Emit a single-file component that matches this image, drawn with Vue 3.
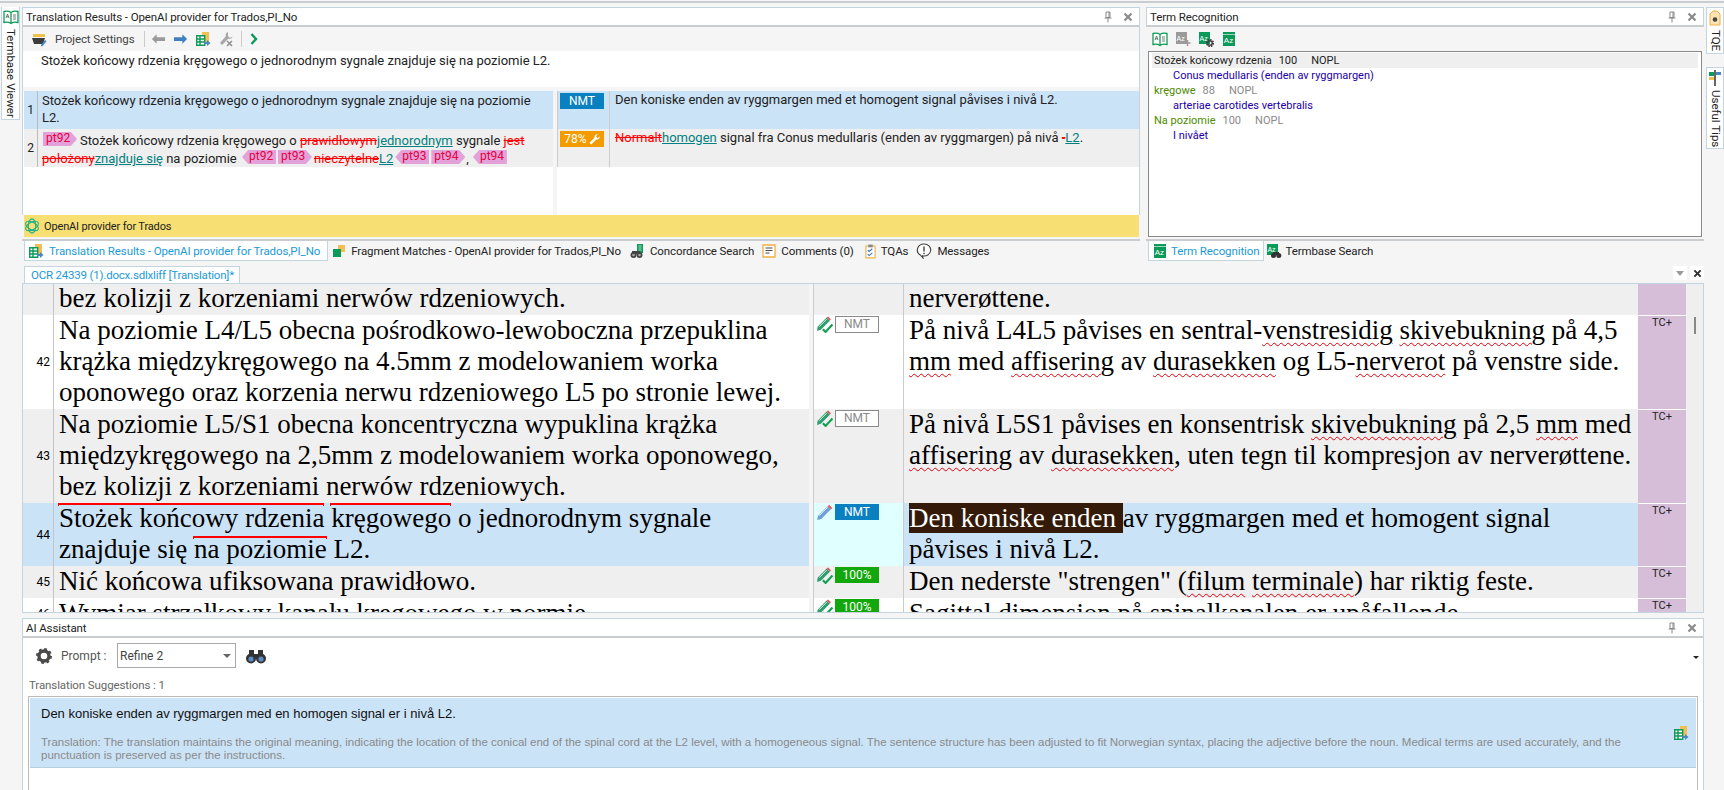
<script setup>
const S = (t, c = '') => ({ t, c })
const rows = [
  { n: '', bg: 'gray', cut: true, lines: 1, st: '', badge: '', src: [S('bez kolizji z korzeniami nerwów rdzeniowych.')], tgt: [S('nerverøttene.')], tc: '' },
  { n: '42', bg: 'white', lines: 3, st: 'check', badge: 'ghost', label: 'NMT',
    src: [S('Na poziomie L4/L5 obecna pośrodkowo-lewoboczna przepuklina krążka międzykręgowego na 4.5mm z modelowaniem worka oponowego oraz korzenia nerwu rdzeniowego L5 po stronie lewej.')],
    tgt: [S('På nivå L4L5 påvises en sentral-'), S('venstresidig', 'sq'), S(' '), S('skivebukning', 'sq'), S(' på 4,5 '), S('mm', 'sq'), S(' med '), S('affisering', 'sq'), S(' av '), S('durasekken', 'sq'), S(' og L5-'), S('nerverot', 'sq'), S(' på venstre side.')], tc: 'TC+' },
  { n: '43', bg: 'gray', lines: 3, st: 'check', badge: 'ghost', label: 'NMT',
    src: [S('Na poziomie L5/S1 obecna koncentryczna wypuklina krążka międzykręgowego na 2,5mm z modelowaniem worka oponowego, bez kolizji z korzeniami nerwów rdzeniowych.')],
    tgt: [S('På nivå L5S1 påvises en konsentrisk '), S('skivebukning', 'sq'), S(' på 2,5 '), S('mm', 'sq'), S(' med '), S('affisering', 'sq'), S(' av '), S('durasekken', 'sq'), S(', uten tegn til kompresjon av nerverøttene.')], tc: 'TC+' },
  { n: '44', bg: 'active', lines: 2, st: 'pencil', badge: 'blue', label: 'NMT',
    src: [S('Stożek końcowy rdzenia', 'tm'), S(' '), S('kręgowego', 'tm'), S(' o jednorodnym sygnale znajduje się '), S('na poziomie', 'tm tm2'), S(' L2.')],
    tgt: [S('Den koniske enden ', 'hl'), S('av ryggmargen med et homogent signal påvises i nivå L2.')], tc: 'TC+' },
  { n: '45', bg: 'gray', lines: 1, st: 'check', badge: 'green', label: '100%',
    src: [S('Nić końcowa ufiksowana prawidłowo.')],
    tgt: [S('Den nederste "strengen" ('), S('filum', 'sq'), S(' '), S('terminale', 'sq'), S(') har riktig feste.')], tc: 'TC+' },
  { n: '46', bg: 'white', lines: 1, st: 'check', badge: 'green', label: '100%',
    src: [S('Wymiar strzałkowy kanału kręgowego w normie.')],
    tgt: [S('Sagittal dimensjon på spinalkanalen er upåfallende.')], tc: 'TC+' }
]
const terms = [
  { head: 'Stożek końcowy rdzenia', score: '100', tgt: 'Conus medullaris (enden av ryggmargen)', first: true },
  { head: 'kręgowe', score: '88', tgt: 'arteriae carotides vertebralis' },
  { head: 'Na poziomie', score: '100', tgt: 'I nivået' }
]
</script>

<template>
  <svg class="defs" aria-hidden="true">
    <symbol id="book" viewBox="0 0 16 14"><path d="M8 2.500C6 1 3 1 1 1.500V12.500C3 12 6 12 8 13.500C10 12 13 12 15 12.500V1.500C13 1 10 1 8 2.500V13.500" fill="#fff" stroke="#0f9d58" stroke-width="1.300"/><path d="M3 8l1.500-4L6 8M3.600 6.800H5.400" fill="none" stroke="#555" stroke-width=".8"/><path d="M10 5h3M10 7h3M10 9h3" stroke="#555" stroke-width=".8"/></symbol>
    <symbol id="tbl" viewBox="0 0 16 16"><path d="M7 1h7v10H7z" fill="#f2bf55"/><path d="M1.700 4.700h8v9.600h-8z" fill="#fff" stroke="#0b9a59" stroke-width="1.400"/><path d="M1.700 8h8M1.700 11h8M5 4.700v9.600" stroke="#0b9a59" stroke-width="1.400"/><path d="M9 11h3V9l3.500 3-3.500 3v-2H9z" fill="#4a86c0"/></symbol>
    <symbol id="doc" viewBox="0 0 16 16"><path d="M2 3h12v3H2z" fill="#f0c050"/><path d="M1 7h13l-2 6H3z" fill="#3c3c3c"/><path d="M10 14l4-5 1.500 1.200-4 5H10z" fill="#4a86c0"/></symbol>
    <symbol id="arrow" viewBox="0 0 16 12"><path d="M1 6l5-5v3h9v4H6v3z"/></symbol>
    <symbol id="tools" viewBox="0 0 16 16"><path d="M10 1c-2 .5-3 2.500-2 4L2 12l2 2 6.500-6.500c1.500 1 3.500 0 4-2L12 7l-2-2z" fill="#a8a8a8"/><path d="M9 10l5 5M14 10l-5 5" stroke="#8f8f8f" stroke-width="1.500"/></symbol>
    <symbol id="pin" viewBox="0 0 10 12"><path d="M3 1h4v5.500H3zM1.500 7h7M5 7v4.500M6 1v5" fill="none" stroke="#888" stroke-width="1"/></symbol>
    <symbol id="x" viewBox="0 0 10 10"><path d="M1.500 1.500l7 7M8.500 1.500l-7 7" stroke="currentColor" stroke-width="2.200"/></symbol>
    <symbol id="frag" viewBox="0 0 14 14"><path d="M6 1h7v7H6z" fill="#f2bf55"/><path d="M1 5h8v8H1z" fill="#0b9a59"/></symbol>
    <symbol id="conc" viewBox="0 0 16 16"><path d="M8 1h6v9H8z" fill="#0b9a59"/><path d="M9.500 3h3M9.500 5h3M9.500 7h3" stroke="#fff" stroke-width=".7"/><circle cx="4.500" cy="12" r="3" fill="#444"/><circle cx="10.500" cy="12" r="3" fill="#444"/><circle cx="4.500" cy="12" r="1.300" fill="#aaa"/><circle cx="10.500" cy="12" r="1.300" fill="#aaa"/><path d="M3 8h8v3H3z" fill="#444"/></symbol>
    <symbol id="note" viewBox="0 0 14 14"><path d="M1 1h12v12H1z" fill="#fff" stroke="#f0b040" stroke-width="1.300"/><path d="M3.500 4h7M3.500 6.500h7M3.500 9h4" stroke="#444" stroke-width="1"/></symbol>
    <symbol id="clip" viewBox="0 0 12 16"><path d="M1 2.500h10v13H1z" fill="#fff" stroke="#f0b040" stroke-width="1.200"/><path d="M3.500 1h5v3h-5z" fill="#888"/><path d="M3 7l1.500 1.500L8 5.500M3 11.500L4.500 13 8 10" fill="none" stroke="#3a78b8" stroke-width="1.200"/></symbol>
    <symbol id="msg" viewBox="0 0 16 16"><path d="M8 1a6.500 6 0 1 1-1.500 11.800L7 15l-2.700-3A6.500 6 0 0 1 8 1z" fill="#fff" stroke="#444" stroke-width="1.100"/><path d="M8 3.500v5M8 9.800v1.500" stroke="#444" stroke-width="1.400"/></symbol>
    <symbol id="ai" viewBox="0 0 18 18"><g fill="none" stroke="#1fae86" stroke-width="1.200"><ellipse cx="9" cy="9" rx="4.200" ry="8"/><ellipse cx="9" cy="9" rx="4.200" ry="8" transform="rotate(60 9 9)"/><ellipse cx="9" cy="9" rx="4.200" ry="8" transform="rotate(120 9 9)"/></g></symbol>
    <symbol id="check" viewBox="0 0 16 16"><path d="M1.500 10L10 1.500l3 3L4.500 13 1 14z" fill="#2f9e6e"/><path d="M3 10l7-7" stroke="#fff" stroke-width=".8"/><path d="M10 1.500L11.500.5 14 3l-1 1.500z" fill="#e05a5a"/><path d="M6.500 12.500l2.500 2.500L15.500 8" fill="none" stroke="#12a050" stroke-width="2"/></symbol>
    <symbol id="pencil" viewBox="0 0 16 16"><path d="M2 11L11 2l3 3-9 9-4 1z" fill="#6f9fd8"/><path d="M3 11l8-8" stroke="#fff" stroke-width=".8"/><path d="M11 2l1.500-1.300L15.500 4 14 5z" fill="#e05a5a"/></symbol>
    <symbol id="wrench" viewBox="0 0 12 12"><path d="M11.500 2.500L9.500 4.500 7.500 2.500 9.500.5C7.500 0 5.500 1.500 6 4L.5 9.500l2 2L8 6c2.500.5 4-1.500 3.500-3.500z" fill="#fff"/></symbol>
    <symbol id="gear" viewBox="0 0 16 16"><circle cx="8" cy="8" r="5" fill="none" stroke="#4a4a4a" stroke-width="3.400"/><circle cx="8" cy="8" r="6.800" fill="none" stroke="#4a4a4a" stroke-width="2.400" stroke-dasharray="2.700 2.640"/></symbol>
    <symbol id="bino" viewBox="0 0 20 16"><path d="M3 2h5v5H3zM12 2h5v5h-5zM8 6h4v4H8z" fill="#333"/><circle cx="5" cy="10.500" r="5" fill="#333"/><circle cx="15" cy="10.500" r="5" fill="#333"/><circle cx="5" cy="11" r="2.600" fill="#5d8cc8"/><circle cx="15" cy="11" r="2.600" fill="#5d8cc8"/></symbol>
    <symbol id="tag" viewBox="0 0 12 16"><path d="M1 4l3-3h4l3 3v11H1z" fill="#fbe3b5" stroke="#f0b040"/><circle cx="6" cy="9.500" r="2.300" fill="#444"/></symbol>
    <symbol id="post" viewBox="0 0 14 16"><path d="M7 0v16" stroke="#333" stroke-width="1.500"/><path d="M1 2h5v4H1z" fill="#0b9a59"/><path d="M8 2h5v3H8z" fill="#4a86c0"/><path d="M1 7h5v3H1z" fill="#f2bf55"/></symbol>
  </svg>

  <div class="app">
    <div class="topline"></div>

    <div class="upper">
      <div class="side left">
        <div class="vtab ltab">
          <svg class="i16"><use href="#book" /></svg>
          <span class="vtext">Termbase Viewer</span>
        </div>
      </div>

      <div class="pane results">
        <div class="title">
          <span>Translation Results - OpenAI provider for Trados,PI_No</span>
          <svg class="pin"><use href="#pin" /></svg>
          <svg class="xx"><use href="#x" /></svg>
        </div>
        <div class="toolbar tb1">
          <svg class="i16"><use href="#doc" /></svg>
          <span class="tb-text">Project Settings</span>
          <i class="sep"></i>
          <svg class="arr back"><use href="#arrow" /></svg>
          <svg class="arr fwd"><use href="#arrow" /></svg>
          <svg class="i16"><use href="#tbl" /></svg>
          <svg class="i16"><use href="#tools" /></svg>
          <i class="sep sep2"></i>
          <svg class="chev" viewBox="0 0 8 12"><path d="M1.500 1l4.500 5-4.500 5" fill="none" stroke="#0b9a59" stroke-width="2.400" /></svg>
        </div>
        <div class="source">Stożek końcowy rdzenia kręgowego o jednorodnym sygnale znajduje się na poziomie L2.</div>
        <div class="band"></div>
        <div class="grid">
          <div class="grow sel">
            <div class="gnum">1</div>
            <div class="gsrc">Stożek końcowy rdzenia kręgowego o jednorodnym sygnale znajduje się na poziomie<br>L2.</div>
            <div class="gstrip"></div>
            <div class="gst"><span class="gbadge blue">NMT</span></div>
            <div class="gtgt">Den koniske enden av ryggmargen med et homogent signal påvises i nivå L2.</div>
          </div>
          <div class="grow alt">
            <div class="gnum">2</div>
            <div class="gsrc"><span class="tag r first">pt92</span>Stożek końcowy rdzenia kręgowego o <span class="del">prawidłowym</span><span class="ins">jednorodnym</span> sygnale <span class="del">jest</span><br><span class="del">położony</span><span class="ins">znajduje się</span> na poziomie <span class="tag l">pt92</span><span class="tag r">pt93</span><span class="del sp">nieczytelne</span><span class="ins">L2</span><span class="tag l">pt93</span><span class="tag r">pt94</span><span class="comma">,</span><span class="tag l">pt94</span></div>
            <div class="gstrip"></div>
            <div class="gst"><span class="gbadge orange">78%<svg class="wr"><use href="#wrench" /></svg></span></div>
            <div class="gtgt"><span class="del">Normalt</span><span class="ins">homogen</span> signal fra Conus medullaris (enden av ryggmargen) på nivå <span class="del">-</span><span class="ins">L2</span>.</div>
          </div>
          <div class="grow fill">
            <div class="gfill"></div>
            <div class="gstrip"></div>
            <div class="gfill"></div>
          </div>
        </div>
        <div class="yellow"><svg class="i16"><use href="#ai" /></svg><span>OpenAI provider for Trados</span></div>
        <div class="pane-end"></div>
        <div class="tabs">
          <div class="tab active"><svg class="i16"><use href="#tbl" /></svg><span>Translation Results - OpenAI provider for Trados,PI_No</span></div>
          <div class="tab"><svg class="i14"><use href="#frag" /></svg><span>Fragment Matches - OpenAI provider for Trados,PI_No</span></div>
          <div class="tab"><svg class="i16"><use href="#conc" /></svg><span>Concordance Search</span></div>
          <div class="tab"><svg class="i14"><use href="#note" /></svg><span>Comments (0)</span></div>
          <div class="tab clip"><svg class="iclip"><use href="#clip" /></svg><span>TQAs</span></div>
          <div class="tab"><svg class="i16"><use href="#msg" /></svg><span>Messages</span></div>
        </div>
      </div>

      <div class="pane term">
        <div class="title">
          <span>Term Recognition</span>
          <svg class="pin"><use href="#pin" /></svg>
          <svg class="xx"><use href="#x" /></svg>
        </div>
        <div class="toolbar tb2">
          <svg class="i16"><use href="#book" /></svg>
          <svg class="i16" viewBox="0 0 16 16"><path d="M1 1h11v12H1z" fill="#9a9a9a"/><text x="1.500" y="10" font-size="7" font-family="Liberation Sans" fill="#fff">Az</text><path d="M12.500 9v6M9.500 12h6" stroke="#9a9a9a" stroke-width="1.500"/></svg>
          <svg class="i16" viewBox="0 0 16 16"><path d="M1 1h11v12H1z" fill="#0b9a59"/><text x="1.500" y="10" font-size="7" font-family="Liberation Sans" fill="#fff">Az</text><circle cx="12" cy="12" r="3" fill="none" stroke="#444" stroke-width="2.200" stroke-dasharray="1.500 .8"/><circle cx="12" cy="12" r="2.200" fill="none" stroke="#444" stroke-width="1.300"/></svg>
          <svg class="i16" viewBox="0 0 14 16"><path d="M1 1h12v14H1z" fill="#0b9a59"/><path d="M1 3.500h12" stroke="#fff" stroke-width=".6"/><text x="1.800" y="12" font-size="8" font-family="Liberation Sans" fill="#fff">Az</text></svg>
        </div>
        <div class="termlist">
          <template v-for="t in terms" :key="t.head">
            <div class="thead" :class="{ first: t.first }">
              <span class="tname">{{ t.head }}</span><span class="tscore">{{ t.score }}</span><span class="tcode">NOPL</span>
            </div>
            <div class="ttgt">{{ t.tgt }}</div>
          </template>
        </div>
        <div class="pane-end"></div>
        <div class="tabs">
          <div class="tab active"><svg class="i16" viewBox="0 0 14 16"><path d="M1 1h12v14H1z" fill="#0b9a59"/><path d="M1 3.500h12" stroke="#fff" stroke-width=".6"/><text x="1.800" y="12" font-size="8" font-family="Liberation Sans" fill="#fff">Az</text></svg><span>Term Recognition</span></div>
          <div class="tab"><svg class="i16" viewBox="0 0 16 16"><path d="M1 1h11v11H1z" fill="#0b9a59"/><text x="1.500" y="9" font-size="7" font-family="Liberation Sans" fill="#fff">Az</text><circle cx="7.500" cy="12.500" r="2.500" fill="#333"/><circle cx="12.800" cy="12.500" r="2.500" fill="#333"/><path d="M7 9h6v3H7z" fill="#333"/></svg><span>Termbase Search</span></div>
        </div>
      </div>

      <div class="side right">
        <div class="vtab tqe"><svg class="i16"><use href="#tag" /></svg><span class="vtext">TQE</span></div>
        <div class="vtab tips"><svg class="i16"><use href="#post" /></svg><span class="vtext">Useful Tips</span></div>
      </div>
    </div>

    <div class="docbar">
      <div class="doctab">OCR 24339 (1).docx.sdlxliff [Translation]*</div>
      <div class="docbtns">
        <span class="dbtn"><i class="tri"></i></span>
        <span class="dbtn"><svg class="xd"><use href="#x" /></svg></span>
      </div>
    </div>

    <div class="editor">
      <div class="rowsbox">
        <div v-for="r in rows" :key="r.n" class="row" :class="[r.bg, { cut: r.cut }]">
          <div class="num">{{ r.n }}</div>
          <div class="src"><div class="inner"><span v-for="(s, i) in r.src" :key="i" :class="s.c">{{ s.t }}</span></div></div>
          <div class="strip"></div>
          <div class="status">
            <svg v-if="r.st" class="sti"><use :href="'#' + r.st" /></svg>
            <span v-if="r.badge" class="badge" :class="r.badge">{{ r.label }}</span>
          </div>
          <div class="tgt"><div class="inner"><span v-for="(s, i) in r.tgt" :key="i" :class="s.c">{{ s.t }}</span></div></div>
          <div class="tc">{{ r.tc }}</div>
        </div>
      </div>
      <div class="scroll"><i class="thumb"></i></div>
    </div>

    <div class="pane ai">
      <div class="title">
        <span>AI Assistant</span>
        <svg class="pin"><use href="#pin" /></svg>
        <svg class="xx"><use href="#x" /></svg>
      </div>
      <div class="aibody">
        <div class="prompt">
          <svg class="gear"><use href="#gear" /></svg>
          <span class="plabel">Prompt :</span>
          <div class="combo"><span>Refine 2</span><i class="tri small"></i></div>
          <svg class="bino"><use href="#bino" /></svg>
          <i class="tri tiny"></i>
        </div>
        <div class="sugg">Translation Suggestions : 1</div>
        <div class="box">
          <div class="card">
            <div class="ctext">
              <div class="cmain">Den koniske enden av ryggmargen med en homogen signal er i nivå L2.</div>
              <div class="cnote">Translation: The translation maintains the original meaning, indicating the location of the conical end of the spinal cord at the L2 level, with a homogeneous signal. The sentence structure has been adjusted to fit Norwegian syntax, placing the adjective before the noun. Medical terms are used accurately, and the<br>punctuation is preserved as per the instructions.</div>
            </div>
            <svg class="cicon"><use href="#tbl" /></svg>
          </div>
        </div>
      </div>
    </div>
  </div>
</template>

<style>
html, body { margin: 0; background: #f5f5f5; overflow: hidden; }
</style>

<style scoped>
.defs { position: absolute; width: 0; height: 0; }
.app {
  width: 1724px; height: 790px; overflow: hidden; background: #f5f5f5;
  display: flex; flex-direction: column;
  font-family: Roboto, "Liberation Sans", sans-serif; font-size: 12px; color: #222;
}
.topline { height: 2px; margin-top: 1px; background: #c9cdd0; }
.upper { display: flex; height: 254px; margin-top: 4px; flex: none; }
.side { flex: none; display: flex; flex-direction: column; }
.side.left { width: 22px; }
.side.right { width: 18px; margin-left: 2px; }
.vtab {
  background: #fff; border: 1px solid #c5d5e0; box-sizing: border-box;
  display: flex; flex-direction: column; align-items: center; padding-top: 2px; gap: 4px; overflow: hidden;
}
.ltab { width: 19px; height: 113px; margin-left: 1px; border-top: 0; }
.tqe { height: 47px; }
.tips { height: 82px; margin-top: 13px; }
.vtext { writing-mode: vertical-rl; white-space: nowrap; font-size: 11.500px; color: #222; line-height: 15px; flex: none; }
.pane { flex: none; display: flex; flex-direction: column; box-sizing: border-box; }
.results { width: 1118px; }
.term { width: 558px; margin-left: 6px; }
.title {
  height: 20px; flex: none; box-sizing: border-box; background: #fff;
  border: 1px solid #c5d5e0; border-bottom: 2px solid #c9cdd0;
  display: flex; align-items: center; padding-left: 3px; font-size: 11.500px; letter-spacing: -.1px;
}
.title span { flex: 1; }
.pin { width: 10px; height: 12px; margin-right: 10px; }
.xx { width: 10px; height: 10px; color: #8a8a8a; margin-right: 6px; }
.toolbar { height: 24px; flex: none; display: flex; align-items: center; background: #f5f5f5; box-sizing: border-box; }
.tb1 { padding-left: 8px; border-left: 1px solid #c5d5e0; border-right: 1px solid #c5d5e0; }
.tb2 { padding-left: 6px; gap: 7px; }
.i16 { width: 16px; height: 16px; flex: none; }
.i14 { width: 14px; height: 14px; flex: none; }
.iclip { width: 11px; height: 16px; flex: none; }
.tb-text { margin-left: 8px; color: #444; font-size: 11.500px; letter-spacing: -.1px; }
.sep { width: 1px; height: 16px; background: #ccc; margin: 0 6px 0 10px; }
.sep2 { margin: 0 8px 0 0; }
.arr { width: 15px; height: 12px; margin-right: 7px; }
.back { fill: #9a9a9a; }
.fwd { fill: #3f7fbf; transform: scaleX(-1); }
.tb1 .i16 { margin-right: 7px; }
.tb1 .i16:first-child { margin-right: 0; }
.chev { width: 8px; height: 12px; }
.source {
  height: 36px; flex: none; background: #fff; box-sizing: border-box; padding: 0 0 0 18px; line-height: 19px;
  font-size: 13px; color: #222; border-left: 1px solid #c5d5e0; border-right: 1px solid #c5d5e0;
}
.band { height: 4px; flex: none; background: #f5f5f5; border-left: 1px solid #c5d5e0; border-right: 1px solid #c5d5e0; }
.grid {
  flex: 1; display: flex; flex-direction: column; background: #fff; padding-left: 1px;
  border-left: 1px solid #c5d5e0; border-right: 1px solid #c5d5e0;
}
.grow { display: flex; height: 38px; flex: none; font-size: 13px; line-height: 18px; color: #222; }
.grow.sel { background: #cbe3f7; }
.grow.alt { background: #efefef; }
.grow.fill { flex: 1; }
.gfill:first-child { width: 529px; flex: none; }
.gfill:last-child { flex: 1; }
.gnum { width: 13px; border-right: 1px solid #bbb; display: flex; align-items: center; justify-content: center; font-size: 12px; flex: none; }
.gsrc { width: 511px; padding: 1px 0 0 4px; flex: none; white-space: nowrap; overflow: hidden; }
.sel .gsrc { line-height: 17px; }
.alt .gsrc { padding-top: 3px; }
.gstrip { width: 4px; background: #f5f5f5; flex: none; }
.gst { flex: none; border-left: 1px solid #ccc; border-right: 1px solid #ccc; padding: 2px 0 0 2px; box-sizing: border-box; width: 53px; }
.gtgt { flex: 1; padding: 0 0 0 5px; }
.gbadge { display: flex; align-items: center; justify-content: center; gap: 2px; width: 44px; height: 16px; color: #fff; font-size: 12px; line-height: 16px; }
.gbadge.blue { background: #0a80c0; }
.gbadge.orange { background: #f39c00; }
.wr { width: 11px; height: 11px; }
.del { color: #f00; text-decoration: line-through; }
.del.sp { margin-left: 2px; }
.ins { color: #008080; text-decoration: underline; }
.tag {
  display: inline-block; box-sizing: border-box; width: 34px; height: 14px; line-height: 13px; background: #e3a1da; color: #e6003c; font-size: 12px; vertical-align: 3px; margin-left: 2px;
}
.tag.r { clip-path: polygon(0 0, 82% 0, 100% 50%, 82% 100%, 0 100%); padding-left: 3px; }
.tag.l { clip-path: polygon(18% 0, 100% 0, 100% 100%, 18% 100%, 0 50%); padding-left: 7px; }
.tag.first { margin: 0 3px 0 1px; }
.comma { margin-left: 1px; margin-right: 2px; }
.yellow { height: 22px; flex: none; background: #f7df74; display: flex; align-items: center; gap: 4px; padding-left: 0; font-size: 11px; letter-spacing: -.15px; margin-left: 2px; margin-right: 1px; }
.pane-end { height: 2px; flex: none; margin-top: 2px; background: #c9cdd0; }
.tabs { height: 20px; flex: none; display: flex; align-items: stretch; font-size: 11.500px; letter-spacing: -.1px; }
.tab { display: flex; align-items: center; gap: 5px; padding: 0 4px; white-space: nowrap; color: #222; }
.tab.clip { margin-left: 3px; }
.tab.active { background: #fff; color: #1c9ad6; border: 1px solid #c5d5e0; border-top: 0; margin-left: 2px; padding: 0 7px 0 3px; }
.term .tab { gap: 3px; padding-left: 2px; }
.term .tab.active { padding: 0 4px 0 3px; }
.termlist {
  flex: 1; margin: 0 2px; background: #fff; border: 1px solid #8a8a8a; box-sizing: border-box; padding: 1px 3px 0;
  font-size: 11px; line-height: 15px; overflow: hidden;
}
.thead { padding-left: 2px; height: 15px; color: #4c8a00; white-space: pre; }
.thead.first { background: #efefef; color: #222; }
.tscore { margin-left: 7px; color: #8a8a8a; }
.tcode { margin-left: 14px; color: #8a8a8a; }
.thead.first .tscore, .thead.first .tcode { color: #222; }
.ttgt { padding-left: 21px; color: #2200a8; height: 15px; }
.docbar { height: 22px; flex: none; display: flex; align-items: flex-end; margin-left: 24px; width: 1680px; }
.doctab {
  width: 216px; height: 17px; box-sizing: border-box; background: #fff; border: 1px solid #c5d5e0; border-bottom: 0;
  padding-left: 6px; color: #1c9ad6; font-size: 11.500px; letter-spacing: -.2px; line-height: 16px; white-space: nowrap;
}
.docbtns { margin-left: auto; display: flex; gap: 3px; padding-bottom: 3px; }
.dbtn { width: 14px; height: 14px; background: #fff; display: flex; align-items: center; justify-content: center; }
.xd { width: 9px; height: 9px; color: #333; }
.tri { display: block; width: 0; height: 0; border-left: 4px solid transparent; border-right: 4px solid transparent; border-top: 5px solid #999; }
.editor {
  flex: none; width: 1682px; height: 330px; margin-left: 22px; box-sizing: border-box;
  border: 1px solid #c5d3de; display: flex; background: #fff; overflow: hidden;
}
.rowsbox { flex: none; width: 1663px; overflow: hidden; }
.row { display: flex; font-family: "Liberation Serif", serif; font-size: 27px; line-height: 31px; color: #000; box-sizing: border-box; padding-bottom: 1px; }
.row.cut { height: 31px; }
.row.cut .inner { margin-top: -1px; }
.row.gray { background: #efefef; }
.row.white { background: #fff; }
.row.active { background: #cbe3f7; }
.num { flex: none; border-right: 1px solid #c5c5c5; font: 12px/14px Roboto, sans-serif; display: flex; align-items: center; justify-content: flex-end; padding-right: 3px; box-sizing: content-box; margin-bottom: -1px; width: 27px; }
.src { width: 750px; padding-left: 5px; flex: none; }
.strip { width: 4px; flex: none; background: #f5f5f5; margin-bottom: -1px; }
.status { flex: none; border-left: 1px solid #ccc; border-right: 1px solid #ccc; display: flex; align-items: flex-start; padding: 0 0 0 2px; gap: 2px; margin-bottom: -1px; box-sizing: border-box; width: 91px; background: inherit; }
.row.active .status { background: #e0ffff; }
.sti { width: 17px; height: 17px; flex: none; margin-top: 1px; }
.badge { width: 44px; height: 16px; box-sizing: border-box; font: 12px/16px Roboto, sans-serif; text-align: center; flex: none; color: #fff; margin-top: 1px; }
.badge.ghost { background: #fff; border: 1px solid #8a8a8a; color: #8a8a8a; line-height: 15px; height: 17px; }
.badge.blue { background: #0a80c0; }
.badge.green { background: #12a70a; }
.tgt { width: 729px; padding-left: 5px; flex: none; box-sizing: content-box; }
.tgt .inner { width: 724px; }
.tc { width: 48px; flex: none; background: #d6bdd8; border-top: 1px solid #fff; margin-bottom: -1px; font: 11px/14px Roboto, sans-serif; text-align: center; color: #222; }
.row.cut .tc { border-top: 0; }
.sq { text-decoration: underline wavy #e0000a 1px; text-underline-offset: 3px; }
.hl { background: #341a08; color: #fff; }
.tm { position: relative; }
.tm::before {
  content: ""; position: absolute; left: -1px; right: 0; top: 0; height: 3px; box-sizing: border-box;
  border-top: 2px solid #f00; border-left: 1px solid #f00; border-right: 1px solid #f00;
}
.tm2::before { top: 2px; }
.scroll { flex: 1; background: #efefef; padding: 33px 0 0 8px; }
.thumb { display: block; width: 2px; height: 17px; background: #888; }
.ai { width: 1682px; margin: 5px 0 0 22px; flex: 1; min-height: 0; }
.aibody { flex: 1; background: #fff; border-left: 1px solid #c5d5e0; border-right: 1px solid #c5d5e0; display: flex; flex-direction: column; min-height: 0; }
.prompt { height: 25px; flex: none; margin-top: 5px; display: flex; align-items: center; }
.gear { width: 16px; height: 16px; margin-left: 13px; }
.plabel { margin-left: 9px; width: 56px; color: #555; font-size: 12px; }
.combo { width: 119px; height: 25px; box-sizing: border-box; border: 1px solid #a8a8a8; display: flex; align-items: center; justify-content: space-between; padding: 0 4px 0 2px; color: #444; font-size: 12px; }
.tri.small { border-left-width: 4px; border-right-width: 4px; border-top: 4px solid #666; }
.bino { width: 20px; height: 16px; margin-left: 10px; }
.tri.tiny { margin-left: auto; margin-right: 4px; margin-top: 4px; border-left-width: 3px; border-right-width: 3px; border-top: 3px solid #222; }
.sugg { margin: 9px 0 0 6px; height: 16px; line-height: 16px; color: #666; font-size: 11.500px; letter-spacing: -.1px; }
.box { flex: 1; margin: 3px 5px 0 5px; border: 1px solid #bbb; border-bottom: 0; padding: 1px 1px 0; }
.card { height: 70px; box-sizing: border-box; background: #cbe3f7; border-bottom: 1px solid #b8cfe0; display: flex; align-items: flex-start; padding: 8px 7px 0 11px; font-family: "Liberation Sans", sans-serif; }
.ctext { flex: 1; min-width: 0; }
.cmain { font-size: 13px; line-height: 15px; color: #111; }
.cnote { font-size: 11.500px; line-height: 13px; margin-top: 15px; color: #8a8a8a; white-space: nowrap; }
.cicon { width: 16px; height: 16px; margin-top: 19px; flex: none; }
</style>
